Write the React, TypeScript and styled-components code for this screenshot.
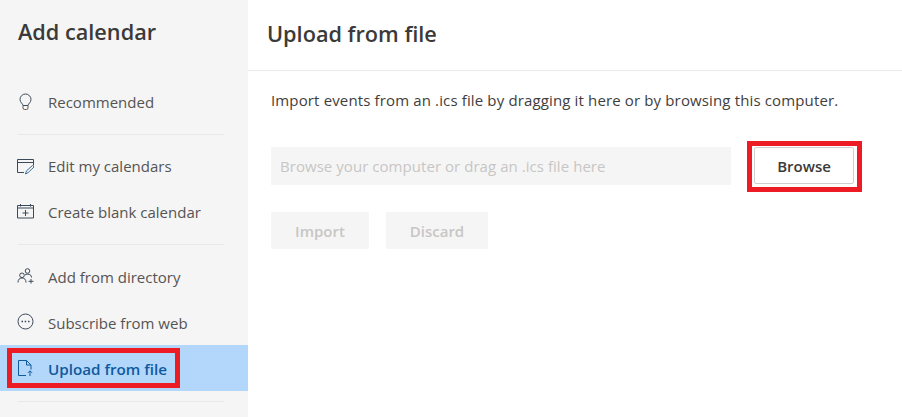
import React from 'react';
import styled, { createGlobalStyle } from 'styled-components';

const GlobalStyle = createGlobalStyle`
  html, body { margin: 0; padding: 0; background: #fff; }
  body { font-family: "Open Sans", "Liberation Sans", sans-serif; }
`;

const Page = styled.div`
  display: flex;
  width: 902px;
  height: 417px;
  overflow: hidden;
`;

const Sidebar = styled.aside`
  width: 248px;
  flex: none;
  background: #f5f5f5;
  display: flex;
  flex-direction: column;
`;

const SideTitle = styled.h1`
  margin: 0;
  padding: 17px 0 0 18px;
  height: 79px;
  box-sizing: border-box;
  flex: none;
  font-size: 21.7px;
  line-height: 30px;
  font-weight: 600;
  color: #3b3a39;
`;

const Item = styled.div<{ $active?: boolean }>`
  position: relative;
  height: 46px;
  display: flex;
  align-items: center;
  flex: none;
  padding-left: 17px;
  gap: 13px;
  font-size: ${(p) => (p.$active ? '15.2px' : '15px')};
  font-weight: ${(p) => (p.$active ? 600 : 400)};
  color: ${(p) => (p.$active ? '#0f5a9c' : '#555453')};
  background: ${(p) => (p.$active ? '#b3d6fb' : 'transparent')};
`;

const Label = styled.span<{ $low?: boolean }>`
  padding-top: ${(p) => (p.$low ? 2 : 0)}px;
`;

const IconBox = styled.span`
  width: 18px;
  height: 18px;
  flex: none;
  display: block;
  svg { display: block; }
`;

const Divider = styled.div<{ $top?: number }>`
  height: 1px;
  background: #e9e9e9;
  margin: ${(p) => p.$top ?? 9}px 24px 8px 18px;
  flex: none;
`;

const RedBox = styled.span`
  position: absolute;
  left: 7px;
  top: 3px;
  width: 173px;
  height: 40px;
  box-sizing: border-box;
  border: 5px solid #ed1c24;
`;

const Main = styled.main`
  flex: 1;
  display: flex;
  flex-direction: column;
`;

const MainHeader = styled.header`
  height: 71px;
  box-sizing: border-box;
  border-bottom: 1px solid #ebebeb;
  padding: 19px 0 0 19px;
  font-size: 21.7px;
  line-height: 30px;
  font-weight: 600;
  color: #3b3a39;
`;

const Body = styled.div`
  padding: 19px 0 0 23px;
  display: flex;
  flex-direction: column;
`;

const Lead = styled.p`
  margin: 0;
  font-size: 15px;
  line-height: 20px;
  color: #3f3e3d;
  letter-spacing: 0.14px;
`;

const FileRow = styled.div`
  display: flex;
  align-items: flex-start;
  margin-top: 31px;
`;

const FileField = styled.div`
  width: 460px;
  height: 38px;
  margin-top: 6px;
  background: #f5f5f5;
  box-sizing: border-box;
  padding-left: 9px;
  display: flex;
  align-items: center;
  font-size: 15px;
  letter-spacing: 0.05px;
  color: #c8c6c4;
`;

const BrowseFrame = styled.div`
  margin-left: 16px;
  width: 115px;
  height: 51px;
  box-sizing: border-box;
  border: 5px solid #ed1c24;
  padding: 1px 3px 3px 2px;
  display: flex;
`;

const BrowseButton = styled.button`
  flex: 1;
  border: 1px solid #cfcfcf;
  border-radius: 2px;
  background: #fff;
  font-family: inherit;
  font-size: 15px;
  font-weight: 600;
  color: #3b3a39;
  padding: 0;
`;

const Actions = styled.div`
  display: flex;
  gap: 17px;
  margin-top: 20px;
`;

const DisabledButton = styled.button<{ $w: number }>`
  width: ${(p) => p.$w}px;
  height: 37px;
  border: none;
  border-radius: 2px;
  background: #f5f5f5;
  color: #c8c6c4;
  font-family: inherit;
  font-size: 15px;
  font-weight: 600;
  padding: 0;
`;

const Svg: React.FC<{ children: React.ReactNode }> = ({ children }) => (
  <svg width="18" height="18" viewBox="0 0 18 18" fill="none" stroke="#3b4a5a" strokeWidth="1">
    {children}
  </svg>
);

const BulbIcon = () => (
  <Svg>
    <path d="M6 12.500C5.800 10.500 3 9.600 3 6.500a5.500 5.500 0 0 1 11 0c0 3.100-2.800 4-3 6z" />
    <path d="M6 12.500v2.500a1.500 1.500 0 0 0 1.500 1.500h2a1.500 1.500 0 0 0 1.500-1.500v-2.500" stroke="#6a5a48" />
  </Svg>
);

const EditIcon = () => (
  <Svg>
    <path d="M7 15.500H.5V2.500h16v6" />
    <path d="M.5 5.500h16" />
    <path d="M8.500 17l1-3.200 6-5.300 1.500 1.500-6 5.700z" stroke="#3f6f9f" />
  </Svg>
);

const BlankIcon = () => (
  <Svg>
    <path d="M.5 2.500h16v12.500H.5z" />
    <path d="M.5 5h16M3.500 1v2.500M13.500 1v2.500" />
    <path d="M8.500 7v6M5.500 10h6" />
  </Svg>
);

const DirectoryIcon = () => (
  <Svg>
    <circle cx="10.500" cy="4" r="2.300" />
    <circle cx="5" cy="8.300" r="2.300" />
    <path d="M1 15.500c0-3 1.500-4.500 4-4.500s4 1.500 4 4.500" />
    <path d="M8 8c1-1 4-1.200 5.500 0 .7.700 1 1.500 1 2.500" />
    <path d="M14 12v4.500M11.500 14.300h5" />
  </Svg>
);

const SubscribeIcon = () => (
  <Svg>
    <circle cx="8.500" cy="8.500" r="7.500" />
    <path d="M4.500 8.500h1.500M7.700 8.500h1.500M11 8.500h1.500" strokeWidth="1.400" />
  </Svg>
);

const UploadIcon = () => (
  <svg width="18" height="18" viewBox="0 0 18 18" fill="none" stroke="#0f5a9c" strokeWidth="1">
    <path d="M9 16.500H1.500V1.500h8l4.500 4.500v4.500" />
    <path d="M9.500 1.500V6H14" />
    <path d="M13 17v-5M11 13.800l2-2 2 2" />
  </svg>
);

const App: React.FC = () => (
  <Page>
    <GlobalStyle />
    <Sidebar>
      <SideTitle>Add calendar</SideTitle>
      <Item>
        <IconBox><BulbIcon /></IconBox>
        <Label>Recommended</Label>
      </Item>
      <Divider />
      <Item>
        <IconBox><EditIcon /></IconBox>
        <Label>Edit my calendars</Label>
      </Item>
      <Item>
        <IconBox><BlankIcon /></IconBox>
        <Label>Create blank calendar</Label>
      </Item>
      <Divider />
      <Item>
        <IconBox><DirectoryIcon /></IconBox>
        <Label $low>Add from directory</Label>
      </Item>
      <Item>
        <IconBox><SubscribeIcon /></IconBox>
        <Label $low>Subscribe from web</Label>
      </Item>
      <Item $active>
        <IconBox><UploadIcon /></IconBox>
        <Label $low>Upload from file</Label>
        <RedBox />
      </Item>
      <Divider $top={10} />
    </Sidebar>
    <Main>
      <MainHeader>Upload from file</MainHeader>
      <Body>
        <Lead>Import events from an .ics file by dragging it here or by browsing this computer.</Lead>
        <FileRow>
          <FileField>Browse your computer or drag an .ics file here</FileField>
          <BrowseFrame>
            <BrowseButton>Browse</BrowseButton>
          </BrowseFrame>
        </FileRow>
        <Actions>
          <DisabledButton $w={98}>Import</DisabledButton>
          <DisabledButton $w={102}>Discard</DisabledButton>
        </Actions>
      </Body>
    </Main>
  </Page>
);

export default App;
